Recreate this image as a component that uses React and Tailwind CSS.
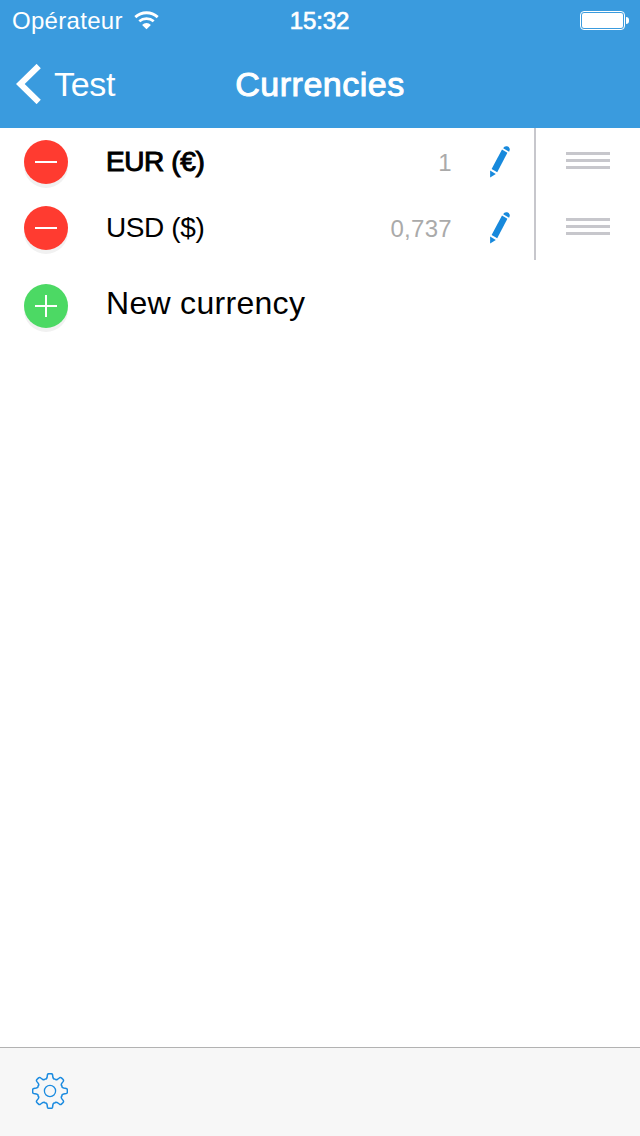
import React from "react"

const currencies = [
  { id: "eur", label: "EUR (€)", rate: "1", isDefault: true },
  { id: "usd", label: "USD ($)", rate: "0,737", isDefault: false },
]

export default function App() {
  return (
    <div className="flex flex-col w-[640px] h-[1136px] bg-white text-black overflow-hidden font-['Liberation_Sans',Arial,sans-serif]">
      <header className="h-32 shrink-0 bg-[#3a9bde] text-white">
        <StatusBar />
        <NavBar />
      </header>

      <main className="flex-1">
        {currencies.map((currency) => (
          <CurrencyRow key={currency.id} currency={currency} />
        ))}
        <div className="flex items-center h-[90px] pl-6">
          <RoundButton type="add" />
          <span className="ml-[38px] -mt-1 text-[32px] leading-none tracking-[0.3px]">
            New currency
          </span>
        </div>
      </main>

      <footer className="flex items-center h-[89px] shrink-0 pl-8 pb-[2px] border-t border-[#b2b2b2] bg-[#f7f7f7]">
        <GearIcon />
      </footer>
    </div>
  )
}

function StatusBar() {
  return (
    <div className="grid grid-cols-3 items-center h-10 text-[24px] leading-none">
      <div className="flex items-center pl-3">
        <span className="mt-[2px] tracking-[0.3px]">Opérateur</span>
        <WifiIcon />
      </div>
      <span className="mt-[2px] pr-px text-center tracking-[-0.1px] [-webkit-text-stroke:0.7px_white]">
        15:32
      </span>
      <div className="flex items-center justify-end pr-[11px]">
        <div className="w-[45px] h-[19px] p-px rounded-[4px] border border-white">
          <div className="w-full h-full rounded-[2px] bg-white" />
        </div>
        <div className="ml-px w-[3px] h-[7px] rounded-r-full bg-white" />
      </div>
    </div>
  )
}

function NavBar() {
  return (
    <div className="grid grid-cols-[213px_1fr_213px] items-center h-[88px] text-[34px] leading-none">
      <button className="flex items-center pl-4">
        <svg width="26" height="40" viewBox="0 0 26 40" fill="none">
          <path d="M22.7 2 L4.3 20 L22.7 38" stroke="white" strokeWidth="6" />
        </svg>
        <span className="ml-3 tracking-[-0.3px]">Test</span>
      </button>
      <h1 className="text-center tracking-[0.5px] [-webkit-text-stroke:1px_white]">
        Currencies
      </h1>
    </div>
  )
}

function CurrencyRow({ currency }) {
  return (
    <div className="flex items-center h-[66px] pl-6">
      <RoundButton type="remove" />
      <span
        className={`ml-[38px] mt-[2px] flex-1 text-[28px] leading-none tracking-[-0.4px] ${
          currency.isDefault ? "[-webkit-text-stroke:1px_black]" : ""
        }`}
      >
        {currency.label}
      </span>
      <span className="mt-[4px] text-[24px] leading-none tracking-[0.3px] text-[#aaaaaa]">
        {currency.rate}
      </span>
      <PencilIcon />
      <div className="flex items-center w-[106px] h-full pl-[30px] border-l-2 border-[#c7c7cc]">
        <div className="flex flex-col gap-1 w-11 -mt-px">
          <span className="h-[3px] bg-[#c7c7cc]" />
          <span className="h-[3px] bg-[#c7c7cc]" />
          <span className="h-[3px] bg-[#c7c7cc]" />
        </div>
      </div>
    </div>
  )
}

function RoundButton({ type }) {
  return (
    <button
      className={`w-11 h-11 mt-[2px] shrink-0 rounded-full shadow-[0_4px_0_#f1f1f1] ${
        type === "add" ? "bg-[#4cd964]" : "bg-[#ff3b30]"
      }`}
    >
      <svg width="44" height="44" viewBox="0 0 44 44" stroke="white" strokeWidth="2">
        <path d="M11 22 H33" />
        {type === "add" && <path d="M22 11 V33" />}
      </svg>
    </button>
  )
}

function WifiIcon() {
  return (
    <svg className="ml-[11px]" width="26" height="20" viewBox="0 0 26 20" fill="none" stroke="white">
      <path d="M1.3 7.1 A16.6 16.6 0 0 1 23.7 7.1" strokeWidth="2.8" />
      <path d="M5.3 11.3 A10.8 10.8 0 0 1 19.7 11.3" strokeWidth="2.7" />
      <path d="M8.1 14.9 A6.2 6.2 0 0 1 16.9 14.9 L12.5 19.2 Z" fill="white" stroke="none" />
    </svg>
  )
}

function PencilIcon() {
  return (
    <svg className="ml-[23px] mr-6" width="35" height="34" viewBox="0 0 35 34" fill="#1789dc">
      <path d="M27 5.6 L32.4 8.8 L22.2 28.3 L16.6 25.1 Z" />
      <path d="M28.2 4.3 C29 2.4 30.8 1.6 32.9 2.6 C34.9 3.6 35.2 5.4 34.1 7.7 Z" />
      <path d="M15.1 26.6 L20.8 29.9 L15.1 33.4 Z" />
    </svg>
  )
}

function polar(deg, radius) {
  const rad = ((deg - 90) * Math.PI) / 180
  const x = 18 + radius * Math.cos(rad)
  const y = 18 + radius * Math.sin(rad)
  return `${x.toFixed(2)} ${y.toFixed(2)}`
}

// Eight teeth, joined by shallow valleys
const gearPath =
  [0, 45, 90, 135, 180, 225, 270, 315]
    .map((a, i) =>
      [
        `${i === 0 ? "M" : "L"}${polar(a - 12, 14)}`,
        `L${polar(a - 9, 16.4)}`,
        `Q${polar(a - 7.5, 17.5)} ${polar(a - 4, 17.4)}`,
        `L${polar(a + 4, 17.4)}`,
        `Q${polar(a + 7.5, 17.5)} ${polar(a + 9, 16.4)}`,
        `L${polar(a + 12, 14)}`,
        `Q${polar(a + 17, 12)} ${polar(a + 22.5, 13)}`,
        `Q${polar(a + 28, 12)} ${polar(a + 33, 14)}`,
      ].join(" ")
    )
    .join(" ") + " Z"

function GearIcon() {
  return (
    <svg width="36" height="36" viewBox="0 0 36 36" fill="none" stroke="#1b8be0" strokeWidth="1.5" strokeLinejoin="round">
      <path d={gearPath} />
      <circle cx="18" cy="18" r="5.6" strokeWidth="1.3" />
    </svg>
  )
}
